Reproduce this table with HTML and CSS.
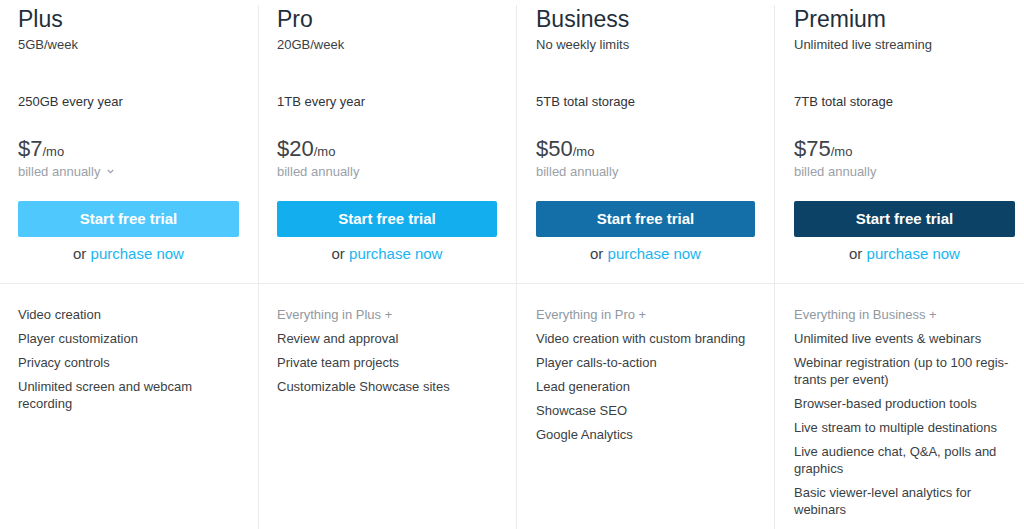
FILE: index.html
```html
<!DOCTYPE html>
<html lang="en">
<head>
<meta charset="utf-8">
<title>Plans</title>
<link rel="stylesheet" href="styles.css">
</head>
<body>
<div class="pricing">
  <section class="plan-top">
    <h2 class="plan-name">Plus</h2>
    <p class="plan-sub">5GB/week</p>
    <p class="plan-storage">250GB every year</p>
    <p class="price"><span class="amount">$7</span><span class="per">/mo</span></p>
    <p class="billed">billed annually <svg class="chev" width="7" height="5" viewBox="0 0 7 5"><polyline points="0.8,1 3.5,3.6 6.2,1" fill="none" stroke="#9aa1a8" stroke-width="1.2"/></svg></p>
    <a class="btn btn-plus" href="#">Start free trial</a>
    <p class="or">or <a href="#">purchase now</a></p>
  </section>
  <section class="plan-top">
    <h2 class="plan-name">Pro</h2>
    <p class="plan-sub">20GB/week</p>
    <p class="plan-storage">1TB every year</p>
    <p class="price"><span class="amount">$20</span><span class="per">/mo</span></p>
    <p class="billed">billed annually</p>
    <a class="btn btn-pro" href="#">Start free trial</a>
    <p class="or">or <a href="#">purchase now</a></p>
  </section>
  <section class="plan-top shifted">
    <h2 class="plan-name">Business</h2>
    <p class="plan-sub">No weekly limits</p>
    <p class="plan-storage">5TB total storage</p>
    <p class="price"><span class="amount">$50</span><span class="per">/mo</span></p>
    <p class="billed">billed annually</p>
    <a class="btn btn-business" href="#">Start free trial</a>
    <p class="or">or <a href="#">purchase now</a></p>
  </section>
  <section class="plan-top shifted last">
    <h2 class="plan-name">Premium</h2>
    <p class="plan-sub">Unlimited live streaming</p>
    <p class="plan-storage">7TB total storage</p>
    <p class="price"><span class="amount">$75</span><span class="per">/mo</span></p>
    <p class="billed">billed annually</p>
    <a class="btn btn-premium" href="#">Start free trial</a>
    <p class="or">or <a href="#">purchase now</a></p>
  </section>

  <ul class="features">
    <li>Video creation</li>
    <li>Player customization</li>
    <li>Privacy controls</li>
    <li>Unlimited screen and webcam recording</li>
  </ul>
  <ul class="features">
    <li class="inherit">Everything in Plus +</li>
    <li>Review and approval</li>
    <li>Private team projects</li>
    <li>Customizable Showcase sites</li>
  </ul>
  <ul class="features shifted">
    <li class="inherit">Everything in Pro +</li>
    <li>Video creation with custom branding</li>
    <li>Player calls-to-action</li>
    <li>Lead generation</li>
    <li>Showcase SEO</li>
    <li>Google Analytics</li>
  </ul>
  <ul class="features shifted last">
    <li class="inherit">Everything in Business +</li>
    <li>Unlimited live events &amp; webinars</li>
    <li>Webinar registration (up to 100 regis&shy;trants per event)</li>
    <li>Browser-based production tools</li>
    <li>Live stream to multiple destinations</li>
    <li>Live audience chat, Q&amp;A, polls and graphics</li>
    <li>Basic viewer-level analytics for webinars</li>
  </ul>
</div>
</body>
</html>
```

FILE: styles.css
```css
* { box-sizing: border-box; }

html, body {
  margin: 0;
  padding: 0;
  background: #ffffff;
}

body {
  font-family: "Liberation Sans", Arial, sans-serif;
  color: #3b3f44;
  overflow: hidden;
}

.pricing {
  margin-top: 5px;
  display: grid;
  grid-template-columns: 259px 258px 258px 1fr;
  grid-template-rows: auto 1fr;
  min-height: calc(100vh - 5px);
}

.plan-top {
  display: flex;
  flex-direction: column;
  padding: 0 19px 20px 18px;
  border-right: 1px solid #e9ebed;
  border-bottom: 1px solid #e9ebed;
}

.plan-top.shifted,
.features.shifted {
  padding-left: 19px;
}

.plan-top.last,
.features.last {
  border-right: none;
  padding-right: 9px;
}

.plan-name {
  margin: 0;
  font-size: 23px;
  line-height: 28px;
  font-weight: normal;
  color: #1f2f3c;
}

.plan-sub {
  margin: 3px 0 0;
  font-size: 13px;
  line-height: 17px;
  height: 57px;
  color: #3b3f44;
}

.plan-storage {
  margin: 0;
  font-size: 13px;
  line-height: 17px;
  color: #2f3338;
}

.price {
  margin: 26px 0 0;
  line-height: 26px;
  color: #3d4247;
}

.amount {
  font-size: 22px;
}

.per {
  font-size: 13px;
}

.billed {
  margin: -2px 0 0;
  font-size: 13px;
  line-height: 17px;
  color: #9aa1a8;
}

.chev {
  margin-left: 3px;
  vertical-align: 2px;
}

.btn {
  display: block;
  margin-top: 21px;
  height: 36px;
  border-radius: 2px;
  color: #ffffff;
  font-weight: bold;
  font-size: 15px;
  line-height: 36px;
  text-align: center;
  text-decoration: none;
}

.btn-plus { background: #4fc9fd; }
.btn-pro { background: #13aeee; }
.btn-business { background: #146fa8; }
.btn-premium { background: #0c4266; }

.or {
  margin: 8px 0 0;
  font-size: 15px;
  line-height: 18px;
  text-align: center;
  color: #3b3f44;
}

.or a {
  color: #1ab5ef;
  text-decoration: none;
}

.features {
  list-style: none;
  margin: 0;
  padding: 22px 19px 0 18px;
  border-right: 1px solid #e9ebed;
  font-size: 13px;
  line-height: 17px;
  color: #3b3f44;
}

.features li {
  margin-bottom: 7px;
}

.features .inherit {
  color: #91989f;
}
```
